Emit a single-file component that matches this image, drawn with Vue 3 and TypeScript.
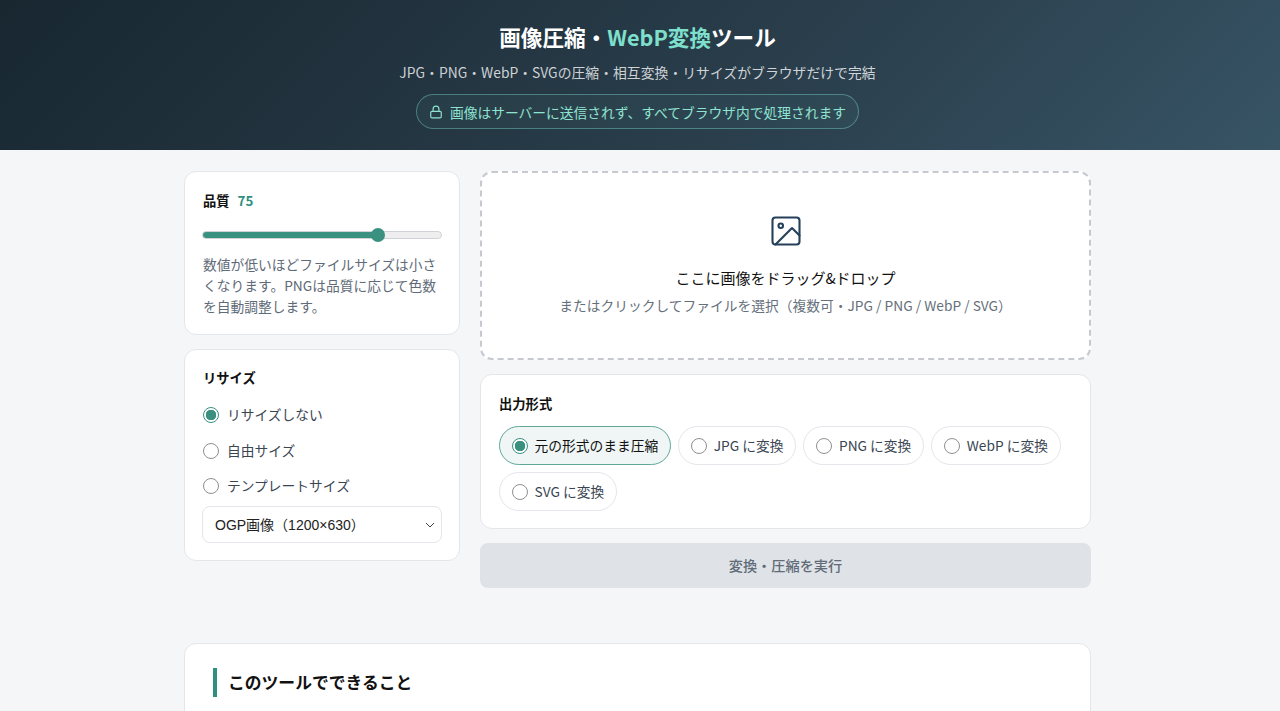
<script setup lang="ts">
import { ref } from 'vue'

type Option = {
    label: string
    value: string
}

const quality = ref(75)
const resize = ref('none')
const format = ref('keep')
const template = ref('ogp')

const resizeOptions: Option[] = [
    { label: 'リサイズしない', value: 'none' },
    { label: '自由サイズ', value: 'free' },
    { label: 'テンプレートサイズ', value: 'template' },
]

const formatOptions: Option[] = [
    { label: '元の形式のまま圧縮', value: 'keep' },
    { label: 'JPG に変換', value: 'jpg' },
    { label: 'PNG に変換', value: 'png' },
    { label: 'WebP に変換', value: 'webp' },
    { label: 'SVG に変換', value: 'svg' },
]
</script>

<template>
    <div class="page">
        <header class="hero">
            <h1 class="hero-title">画像圧縮・<span class="accent">WebP変換</span>ツール</h1>
            <p class="hero-sub">JPG・PNG・WebP・SVGの圧縮・相互変換・リサイズがブラウザだけで完結</p>
            <div class="hero-badge">
                <svg class="lock" viewBox="0 0 24 24" fill="none" stroke="currentColor" stroke-width="2" stroke-linecap="round" stroke-linejoin="round">
                    <rect x="3" y="11" width="18" height="11" rx="2" />
                    <path d="M7 11V7a5 5 0 0 1 10 0v4" />
                </svg>
                <span>画像はサーバーに送信されず、すべてブラウザ内で処理されます</span>
            </div>
        </header>

        <main class="container">
            <div class="tool">
                <aside class="side">
                    <section class="card quality-card">
                        <div class="card-title">品質<span class="quality-value">{{ quality }}</span></div>
                        <input v-model.number="quality" class="slider" type="range" min="0" max="100" />
                        <p class="hint">数値が低いほどファイルサイズは小さくなります。PNGは品質に応じて色数を自動調整します。</p>
                    </section>

                    <section class="card resize-card">
                        <div class="card-title">リサイズ</div>
                        <label v-for="opt in resizeOptions" :key="opt.value" class="resize-row">
                            <input v-model="resize" class="radio" type="radio" name="resize" :value="opt.value" />
                            <span>{{ opt.label }}</span>
                        </label>
                        <select v-model="template" class="template-select">
                            <option value="ogp">OGP画像（1200×630）</option>
                            <option value="eyecatch">アイキャッチ（1280×720）</option>
                        </select>
                    </section>
                </aside>

                <div class="content">
                    <section class="dropzone">
                        <svg class="drop-icon" viewBox="0 0 24 24" fill="none" stroke="currentColor" stroke-width="1.4" stroke-linecap="round" stroke-linejoin="round">
                            <rect x="3" y="3" width="18" height="18" rx="2" />
                            <circle cx="8.5" cy="8.5" r="1.5" />
                            <path d="M21 15 16 10 5 21" />
                        </svg>
                        <div class="drop-title">ここに画像をドラッグ&amp;ドロップ</div>
                        <div class="drop-sub">またはクリックしてファイルを選択（複数可・JPG / PNG / WebP / SVG）</div>
                    </section>

                    <section class="card format-card">
                        <div class="card-title">出力形式</div>
                        <div class="format-list">
                            <label
                                v-for="opt in formatOptions"
                                :key="opt.value"
                                class="format-chip"
                                :class="{ active: format === opt.value }"
                            >
                                <input v-model="format" class="radio" type="radio" name="format" :value="opt.value" />
                                <span>{{ opt.label }}</span>
                            </label>
                        </div>
                    </section>

                    <button class="run-button" type="button" disabled>変換・圧縮を実行</button>
                </div>
            </div>

            <section class="card about">
                <h2 class="about-title">このツールでできること</h2>
            </section>
        </main>
    </div>
</template>

<style scoped>
.page {
    height: 711px;
    overflow: hidden;
    background: #f5f6f8;
    color: #111827;
    font-family: "Noto Sans CJK JP", "Noto Sans", sans-serif;
}

.hero {
    height: 150px;
    box-sizing: border-box;
    padding-top: 21px;
    display: flex;
    flex-direction: column;
    align-items: center;
    background: linear-gradient(135deg, #182730 0%, #2a3e4c 60%, #375465 100%);
    color: #fff;
    /* the reference is centred 2.5px left of the window middle */
    padding-right: 5px;
}

.hero-title {
    margin: 0;
    font-size: 21.6px;
    line-height: 32px;
    font-weight: 700;
}

.accent {
    color: #7ee0cc;
}

.hero-sub {
    margin: 9px 0 0;
    font-size: 13.85px;
    line-height: 20px;
    color: rgba(255, 255, 255, 0.78);
}

.hero-badge {
    margin-top: 12px;
    height: 35px;
    box-sizing: border-box;
    padding: 0 12px;
    display: flex;
    align-items: center;
    gap: 7px;
    border: 1px solid rgba(126, 224, 204, 0.4);
    border-radius: 18px;
    background: rgba(126, 224, 204, 0.05);
    color: #8fe3d1;
    font-size: 13.75px;
}

.lock {
    width: 14px;
    height: 14px;
}

.container {
    width: 907px;
    margin-left: 184px;
    padding-top: 21px;
}

.tool {
    display: grid;
    grid-template-columns: 276px 611px;
    gap: 20px;
    align-items: start;
}

.side,
.content {
    display: flex;
    flex-direction: column;
    gap: 14px;
}

.card {
    box-sizing: border-box;
    background: #fff;
    border: 1px solid #e3e6ea;
    border-radius: 12px;
}

.card-title {
    font-size: 13.3px;
    line-height: 20px;
    font-weight: 700;
    color: #111;
}

.quality-card {
    height: 164px;
    padding: 19px 18px 0;
}

.quality-value {
    margin-left: 8px;
    color: #2f9080;
}

.slider {
    display: block;
    width: 240px;
    height: 14px;
    margin: 17px -1px 0;
    appearance: none;
    -webkit-appearance: none;
    background: none;
}

.slider::-webkit-slider-runnable-track {
    height: 8px;
    border-radius: 4px;
    border: 1px solid #cfd2d6;
    background: linear-gradient(to right, #3a9180 0 73.5%, #eeeeee 73.5% 100%);
}

.slider::-webkit-slider-thumb {
    -webkit-appearance: none;
    width: 14px;
    height: 14px;
    margin-top: -4px;
    border-radius: 50%;
    background: #3a9180;
}

.hint {
    margin: 12px 0 0;
    font-size: 13.75px;
    line-height: 21px;
    color: #5f6b78;
}

.resize-card {
    height: 212px;
    padding: 18px 18px 0;
}

.resize-row {
    display: flex;
    align-items: center;
    gap: 8px;
    height: 20px;
    margin-top: 15.5px;
    font-size: 13.75px;
    color: #3a4552;
}

.resize-row span {
    position: relative;
    top: -1px;
}

.resize-card .card-title + .resize-row {
    margin-top: 17px;
}

.radio {
    flex: none;
    width: 16px;
    height: 16px;
    margin: 0;
    appearance: none;
    -webkit-appearance: none;
    border: 1px solid #8f8f8f;
    border-radius: 50%;
    background: #fff;
}

.radio:checked {
    border-color: #3a9180;
    background: radial-gradient(circle, #3a9180 0 5px, #fff 5.5px);
}

.template-select {
    display: block;
    width: 240px;
    height: 37px;
    margin: 10px -1px 0;
    padding: 0 24px 0 12px;
    border: 1px solid #e3e6ea;
    border-radius: 8px;
    color: #222;
    font-family: "Liberation Sans", "Noto Sans CJK JP", sans-serif;
    font-size: 14px;
    appearance: none;
    -webkit-appearance: none;
    background-color: #fff;
    background-image:
        linear-gradient(45deg, transparent 50%, #444 50%, #444 60%, transparent 60%),
        linear-gradient(135deg, transparent 50%, #444 50%, #444 60%, transparent 60%);
    background-position:
        calc(100% - 11px) 50%,
        calc(100% - 7px) 50%;
    background-size:
        4px 4px,
        4px 4px;
    background-repeat: no-repeat;
}

.dropzone {
    height: 189px;
    box-sizing: border-box;
    padding-top: 40px;
    display: flex;
    flex-direction: column;
    align-items: center;
    background: #fff;
    border: 2px dashed #c6cad0;
    border-radius: 12px;
}

.drop-icon {
    width: 36px;
    height: 36px;
    color: #24405a;
}

.drop-title {
    margin-top: 18px;
    font-size: 15px;
    line-height: 22px;
    font-weight: 400;
    color: #111;
}

.drop-sub {
    margin-top: 6px;
    font-size: 13.75px;
    line-height: 20px;
    color: #66707c;
}

.format-card {
    height: 155px;
    padding: 19px 18px 0;
}

.format-list {
    display: flex;
    flex-wrap: wrap;
    gap: 7px 7.4px;
    margin-top: 12px;
}

.format-chip {
    display: flex;
    align-items: center;
    gap: 7px;
    height: 39px;
    box-sizing: border-box;
    padding: 0 11.5px;
    border: 1px solid #e3e6ea;
    border-radius: 20px;
    font-size: 13.75px;
    color: #3a4552;
}

.format-chip span {
    position: relative;
    top: -1px;
}

.format-chip.active {
    border-color: #5fa898;
    background: #eff6f5;
    color: #111;
}

.run-button {
    height: 45px;
    padding: 0 0 2px;
    border: 0;
    border-radius: 8px;
    background: #dfe2e6;
    color: #5f6b78;
    font-family: inherit;
    font-size: 14.2px;
    font-weight: 500;
}

.about {
    height: 120px;
    margin-top: 55px;
    padding: 24px 28px;
}

.about-title {
    margin: 0;
    padding-left: 11px;
    border-left: 4px solid #2f9080;
    font-size: 16.8px;
    line-height: 29px;
    font-weight: 700;
    color: #111;
}
</style>

<style>
html,
body {
    margin: 0;
    overflow: hidden;
}
</style>
